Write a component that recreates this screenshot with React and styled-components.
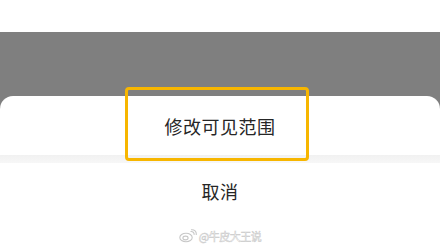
import React from 'react';
import styled, { createGlobalStyle } from 'styled-components';

const GlobalStyle = createGlobalStyle`
  html, body {
    margin: 0;
    padding: 0;
    background: #ffffff;
  }
  body {
    font-family: "Noto Sans CJK SC", "Noto Sans", sans-serif;
  }
`;

const Screen = styled.div`
  width: 440px;
  height: 247px;
  display: flex;
  flex-direction: column;
  overflow: hidden;
  background: #ffffff;
`;

const TopStrip = styled.div`
  height: 32px;
  background: #ffffff;
  flex-shrink: 0;
`;

const Backdrop = styled.div`
  flex: 1;
  background: #7f7f7f;
  padding-top: 64px;
  display: flex;
  flex-direction: column;
`;

const Sheet = styled.div`
  flex: 1;
  background: #ffffff;
  border-radius: 13px 13px 0 0;
  display: flex;
  flex-direction: column;
`;

const OptionRow = styled.div`
  position: relative;
  height: ${(p) => p.$height}px;
  display: flex;
  align-items: center;
  justify-content: center;
  font-size: 18px;
  color: #262626;
  letter-spacing: 0.5px;
`;

const Highlight = styled.div`
  position: absolute;
  left: 125px;
  top: -9px;
  width: 184px;
  height: 74px;
  box-sizing: border-box;
  border: 3px solid #f7b600;
  border-radius: 4px;
`;

const Divider = styled.div`
  height: 8px;
  background: linear-gradient(#f1f1f1, #f7f7f7);
`;

const Watermark = styled.div`
  display: flex;
  align-items: center;
  justify-content: center;
  gap: 2px;
  margin-top: 9px;
  font-size: 11px;
  color: #ffffff;
  -webkit-text-stroke: 0.5px #c8c8c8;
  letter-spacing: -0.5px;
`;

function WeiboMark() {
  return (
    <svg width="18" height="14" viewBox="0 0 18 14" fill="none" stroke="#c8c8c8" strokeWidth="1.1">
      <ellipse cx="7" cy="8.5" rx="6.2" ry="4.3" />
      <ellipse cx="6.5" cy="9" rx="2.6" ry="1.9" />
      <path d="M11.5 2.5c2.2-0.4 4 1.2 3.6 3.4" />
      <path d="M12 0.8c3.4-0.6 5.8 2 5.2 5.2" />
    </svg>
  );
}

export default function App() {
  return (
    <>
      <GlobalStyle />
      <Screen>
        <TopStrip />
        <Backdrop>
          <Sheet>
            <OptionRow $height={59}>
              修改可见范围
              <Highlight />
            </OptionRow>
            <Divider />
            <OptionRow $height={56}>取消</OptionRow>
            <Watermark>
              <WeiboMark />
              <span>@牛皮大王说</span>
            </Watermark>
          </Sheet>
        </Backdrop>
      </Screen>
    </>
  );
}
